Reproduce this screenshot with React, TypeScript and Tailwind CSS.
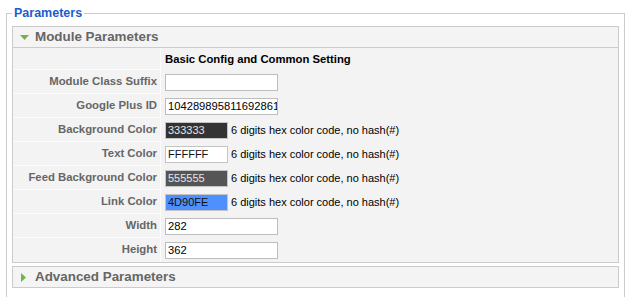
import React from 'react'

const FONT = { fontFamily: '"Liberation Sans", Arial, sans-serif' }

type Row = {
  label: string
  value: string
  kind: 'text' | 'color'
  bg?: string
  fg?: string
}

const ROWS: Row[] = [
  { label: 'Module Class Suffix', value: '', kind: 'text' },
  { label: 'Google Plus ID', value: '104289895811692861', kind: 'text' },
  { label: 'Background Color', value: '333333', kind: 'color', bg: 'bg-[#333333]', fg: 'text-[#e6e6e6]' },
  { label: 'Text Color', value: 'FFFFFF', kind: 'color', bg: 'bg-white', fg: 'text-[#111]' },
  { label: 'Feed Background Color', value: '555555', kind: 'color', bg: 'bg-[#555555]', fg: 'text-[#e6e6e6]' },
  { label: 'Link Color', value: '4D90FE', kind: 'color', bg: 'bg-[#4d90fe]', fg: 'text-[#111]' },
  { label: 'Width', value: '282', kind: 'text' },
  { label: 'Height', value: '362', kind: 'text' },
]

function Toggler({ open, title }: { open: boolean; title: string }) {
  return (
    <div className="flex h-[20px] items-center bg-[#f4f4f4]">
      <span className="flex w-[22px] items-center pl-[7px]">
        {open ? (
          <svg width="9" height="5" viewBox="0 0 9 5">
            <polygon points="0,0 9,0 4.5,5" fill="#74b34a" />
          </svg>
        ) : (
          <svg width="5" height="9" viewBox="0 0 5 9" className="ml-[1px]">
            <polygon points="0,0 5,4.5 0,9" fill="#74b34a" />
          </svg>
        )}
      </span>
      <span className="text-[13.4px] font-bold leading-none text-[#666]">{title}</span>
    </div>
  )
}

export default function App() {
  return (
    <div className="min-h-[297px] bg-white pl-[6px] pr-[4px] pt-[5px]" style={FONT}>
      <fieldset className="border border-[#cccccc] px-[5px] pt-[5px] pb-[40px]">
        <legend className="px-[2px] text-[12.5px] font-bold leading-[16px] text-[#1a5dcc]">Parameters</legend>

        {/* Module parameters panel */}
        <div className="mb-[3px] border border-[#cccccc]">
          <Toggler open title="Module Parameters" />
          <div className="border-t border-[#cccccc] bg-[#f3f3f3] text-[11px]">
            <div className="flex h-[22px]">
              <div className="w-[148px] border-r border-b border-[#fcfcfc]" />
              <div className="flex items-center pl-[4px] text-[11.3px] font-bold text-black">
                Basic Config and Common Setting
              </div>
            </div>
            {ROWS.map((r, i) => (
              <div key={r.label} className="flex h-[24px]">
                <div
                  className={`flex w-[148px] items-center justify-end border-r border-[#fcfcfc] pr-[3px] text-[11.35px] font-bold text-[#666] ${
                    i < ROWS.length - 1 ? 'border-b' : ''
                  }`}
                >
                  {r.label}
                </div>
                <div className="flex items-center pl-[4px]">
                  {r.kind === 'text' ? (
                    <input
                      readOnly
                      value={r.value}
                      className="h-[17px] w-[113px] border border-[#bdbdbd] bg-white pl-[2px] text-[11.2px] text-black outline-none"
                    />
                  ) : (
                    <>
                      <input
                        readOnly
                        value={r.value}
                        className={`h-[17px] w-[63px] border border-[#c4c4c4] pl-[2px] text-[11px] outline-none ${r.bg} ${r.fg}`}
                      />
                      <span className="ml-[3px] text-[11px] text-black">6 digits hex color code, no hash(#)</span>
                    </>
                  )}
                </div>
              </div>
            ))}
          </div>
        </div>

        {/* Advanced parameters panel */}
        <div className="border border-[#cccccc]">
          <Toggler open={false} title="Advanced Parameters" />
        </div>
      </fieldset>
    </div>
  )
}
